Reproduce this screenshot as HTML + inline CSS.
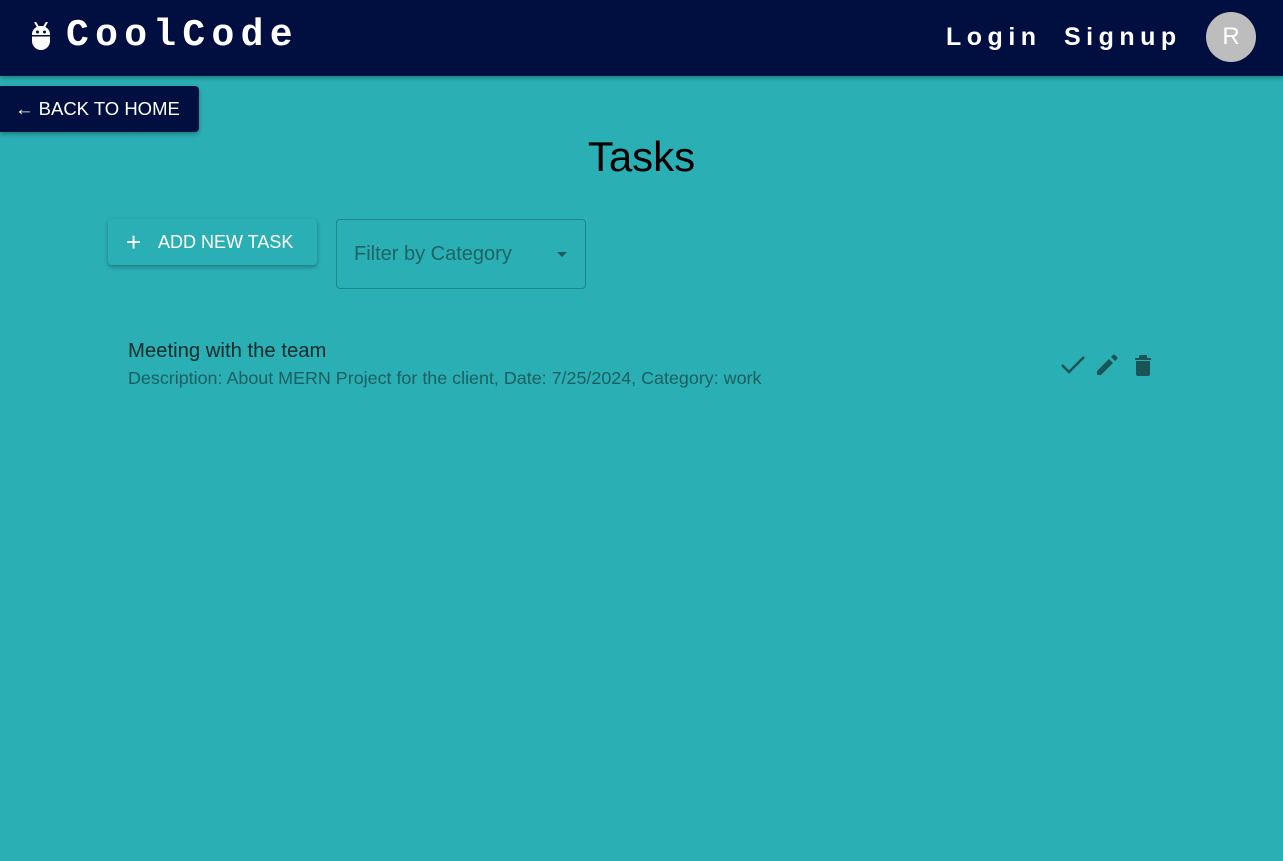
<!DOCTYPE html>
<html><head><style>
*{box-sizing:border-box;margin:0;padding:0}
body{width:1283px;height:861px;background:#2aafb4;font-family:"Liberation Sans",sans-serif;position:relative;overflow:hidden}
.nav{position:absolute;left:0;top:0;width:1283px;height:76px;background:#000e40;box-shadow:0 2px 4px rgba(0,0,0,.3)}
.logo{position:absolute;left:66px;top:14px;font-family:"Liberation Mono",monospace;font-weight:bold;font-size:38px;letter-spacing:6.3px;color:#fff}
.nl{position:absolute;top:23px;font-weight:bold;font-size:25px;letter-spacing:5.5px;color:#fff}
.av{position:absolute;left:1206px;top:12px;width:50px;height:50px;border-radius:50%;background:#bdbdbd;color:#fff;font-size:24px;text-align:center;line-height:50px}
.back{position:absolute;left:0;top:86px;width:199px;height:46px;background:#000e40;border-radius:0 4px 4px 0;color:#fff;font-size:18.5px;line-height:46px;padding-left:15px;box-shadow:0 2px 4px rgba(0,0,0,.3)}
h1{position:absolute;left:0;width:1283px;top:133px;text-align:center;font-weight:normal;font-size:42px;color:#000}
.add{position:absolute;left:108px;top:219px;width:209px;height:46px;background:#2aafb4;border-radius:4px;box-shadow:0 2px 4px rgba(0,0,0,.3);color:#fff;font-size:18px;line-height:46px;padding-left:50px}
.add span{position:absolute;left:18px;top:0;font-size:26px}
.sel{position:absolute;left:336px;top:219px;width:250px;height:70px;border:1px solid rgba(0,0,0,.23);border-radius:4px;color:#1d6466;font-size:20px;line-height:68px;padding-left:17px}
.sel i{position:absolute;left:220px;top:32px;border:5px solid transparent;border-top-color:#1d5a5c}
.t1{position:absolute;left:128px;top:340px;font-size:20.3px;color:#0d2a2b}
.t2{position:absolute;left:128px;top:368px;font-size:17.9px;color:#1b5f62}
</style></head><body>
<div class="nav">
<svg style="position:absolute;left:31px;top:22px" width="20" height="28" viewBox="0 0 20 28"><path d="M4 0l3 5M16 0l-3 5" stroke="#fff" stroke-width="2"/><path d="M1 12a9 8 0 0 1 18 0v7a9 9 0 0 1-18 0z" fill="#fff"/><circle cx="6.5" cy="10" r="1.5" fill="#000e40"/><circle cx="13.5" cy="10" r="1.5" fill="#000e40"/><rect x="1" y="13" width="18" height="1.5" fill="#000e40"/></svg>
<div class="logo">CoolCode</div>
<div class="nl" style="left:946px">Login</div>
<div class="nl" style="left:1064px">Signup</div>
<div class="av">R</div>
</div>
<div class="back">← BACK TO HOME</div>
<h1>Tasks</h1>
<div class="add"><span>+</span>ADD NEW TASK</div>
<div class="sel">Filter by Category<i></i></div>
<div class="t1">Meeting with the team</div>
<div class="t2">Description: About MERN Project for the client, Date: 7/25/2024, Category: work</div>
<svg style="position:absolute;left:1060px;top:352px" width="100" height="26" viewBox="0 0 100 26">
<path d="M2 13l7 7 15-15" stroke="#1a5456" stroke-width="2.5" fill="none"/>
<path d="M37 19v4h4l12-12-4-4zM55 9l-4-4 2-2a1.4 1.4 0 0 1 2 0l2 2a1.4 1.4 0 0 1 0 2z" fill="#1a5456"/>
<path d="M75 6h16v2H75zM79 3h8v3h-8zM76 9h14v13a2 2 0 0 1-2 2H78a2 2 0 0 1-2-2z" fill="#1a5456"/>
</svg>
</body></html>
